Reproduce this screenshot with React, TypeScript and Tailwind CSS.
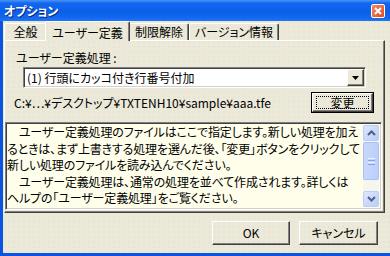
import React from "react";

const raised =
  "border border-t-white border-l-white border-r-[#404040] border-b-[#404040] shadow-[inset_-1px_-1px_0_#808080]";
const sunken =
  "border border-t-[#808080] border-l-[#808080] border-r-white border-b-white shadow-[inset_1px_1px_0_#404040,inset_-1px_-1px_0_#d4d0c8]";
const pattern =
  "bg-[#ece9d8] bg-[radial-gradient(circle_at_1px_1px,#d3d6e3_0.55px,transparent_0.75px)] bg-[length:5px_5px]";

function Chevron({ up }: { up?: boolean }) {
  return (
    <svg width="9" height="6" viewBox="0 0 9 6">
      <path
        d={up ? "M1 5 L4.5 1.5 L8 5" : "M1 1 L4.5 4.5 L8 1"}
        fill="none"
        stroke="#4d6185"
        strokeWidth="2"
      />
    </svg>
  );
}

export default function App() {
  return (
    <div className="w-[390px] h-[256px] bg-[#0a55e0] flex flex-col overflow-hidden text-black text-[12px] font-['Noto_Sans_CJK_JP','Noto_Sans_CJK_SC',sans-serif] [font-feature-settings:'palt']">
      {/* Title bar */}
      <div className="h-[21px] shrink-0 flex items-center justify-between pl-[4px] pr-[4px] bg-[linear-gradient(180deg,#4a95f8_0%,#1466ee_15%,#0a5fe9_55%,#1269f0_85%,#2275f3_100%)]">
        <span className="text-white font-bold text-[12px] leading-[14px] [text-shadow:1px_1px_0_#0a2a80]">
          オプション
        </span>
        <div className="w-[14px] h-[14px] rounded-[2px] border border-white bg-[linear-gradient(135deg,#f0886a,#e04a1e)] flex items-center justify-center mr-[1px]">
          <svg width="8" height="8" viewBox="0 0 8 8">
            <path d="M1 1 L7 7 M7 1 L1 7" stroke="white" strokeWidth="2" />
          </svg>
        </div>
      </div>

      {/* Body */}
      <div className={`flex-1 ml-[3px] mb-[3px] flex flex-col ${pattern}`}>
        {/* Tabs */}
        <div className="flex h-[19px] pl-[1px] relative z-10 shrink-0">
          <div className="mt-[2px] h-[17px] w-[42px] border-t border-l border-white rounded-tl-[2px] flex items-center justify-center">
            全般
          </div>
          <div className={`h-[20px] w-[85px] border-t border-l border-white border-r border-r-[#404040] shadow-[inset_-1px_0_0_#808080] rounded-t-[2px] flex items-start justify-center pt-[2px] -ml-[1px] ${pattern}`}>
            ユーザー定義
          </div>
          <div className="mt-[2px] h-[17px] w-[59px] border-t border-r border-white border-r-[#404040] shadow-[inset_-1px_0_0_#808080] rounded-tr-[2px] flex items-center justify-center">
            制限解除
          </div>
          <div className="mt-[2px] h-[17px] w-[90px] border-t border-l border-r border-white border-r-[#404040] shadow-[inset_-1px_0_0_#808080] rounded-t-[2px] flex items-center justify-center">
            バージョン情報
          </div>
        </div>

        {/* Panel */}
        <div className={`ml-[1px] w-[381px] h-[173px] shrink-0 flex flex-col ${raised}`}>
          <div className="ml-[11px] mt-[10px] h-[14px] leading-[14px]">
            ユーザー定義処理 :
          </div>
          <div className={`ml-[18px] mt-[2px] w-[343px] h-[21px] bg-white flex items-center justify-between ${sunken}`}>
            <span className="pl-[3px] leading-[14px] whitespace-nowrap">
              (1) 行頭にカッコ付き行番号付加
            </span>
            <div className={`w-[17px] h-[17px] mr-[1px] bg-[#ece9d8] flex items-center justify-center ${raised}`}>
              <svg width="7" height="4" viewBox="0 0 7 4">
                <path d="M0 0 H7 L3.5 4 Z" fill="black" />
              </svg>
            </div>
          </div>
          <div className="mt-[4px] h-[21px] flex items-center">
            <span className="ml-[9px] whitespace-nowrap leading-[14px]">
              C:¥…¥デスクトップ¥TXTENH10¥sample¥aaa.tfe
            </span>
            <div className="ml-auto mr-[10px] w-[63px] h-[21px] border border-black">
              <div className={`w-full h-full flex items-center justify-center ${raised}`}>
                <div className="w-[53px] h-[13px] border border-dotted border-black flex items-center justify-center leading-[12px]">
                  変更
                </div>
              </div>
            </div>
          </div>
          <div className={`mt-[9px] w-[377px] h-[88px] bg-[#fefeea] flex ${sunken}`}>
            <div className="flex-1 min-w-0 pl-[1px] pt-[1px] leading-[16.5px] tracking-[-0.15px] whitespace-pre">
              {"\u3000ユーザー定義処理のファイルはここで指定します。新しい処理を加え\nるときは、まず上書きする処理を選んだ後、「変更」ボタンをクリックして\n新しい処理のファイルを読み込んでください。\n\u3000ユーザー定義処理は、通常の処理を並べて作成されます。詳しくは\nヘルプの「ユーザー定義処理」をご覧ください。"}
            </div>
            {/* Scrollbar */}
            <div className="w-[16px] shrink-0 mr-[2px] my-[2px] flex flex-col bg-[#f6f5ee]">
              <div className="h-[16px] rounded-[2px] border border-[#b9cdf8] bg-[linear-gradient(135deg,#dde7ff,#b8cdf9)] flex items-center justify-center">
                <Chevron up />
              </div>
              <div className="mt-[1px] h-[38px] rounded-[2px] border border-[#a9c0f5] bg-[linear-gradient(90deg,#c8d7fd,#bccff9)] flex flex-col items-center justify-center gap-[1px]">
                <div className="w-[7px] h-[1px] bg-[#eef3ff]" />
                <div className="w-[7px] h-[1px] bg-[#8aa6e8]" />
                <div className="w-[7px] h-[1px] bg-[#eef3ff]" />
                <div className="w-[7px] h-[1px] bg-[#8aa6e8]" />
              </div>
              <div className="flex-1" />
              <div className="h-[16px] rounded-[2px] border border-[#b9cdf8] bg-[linear-gradient(135deg,#dde7ff,#b8cdf9)] flex items-center justify-center">
                <Chevron />
              </div>
            </div>
          </div>
        </div>

        {/* Buttons */}
        <div className="mt-[8px] flex justify-end gap-[9px] pr-[12px]">
          <div className={`w-[78px] h-[24px] flex items-center justify-center ${raised}`}>
            OK
          </div>
          <div className={`w-[79px] h-[24px] flex items-center justify-center ${raised}`}>
            キャンセル
          </div>
        </div>
      </div>
    </div>
  );
}
